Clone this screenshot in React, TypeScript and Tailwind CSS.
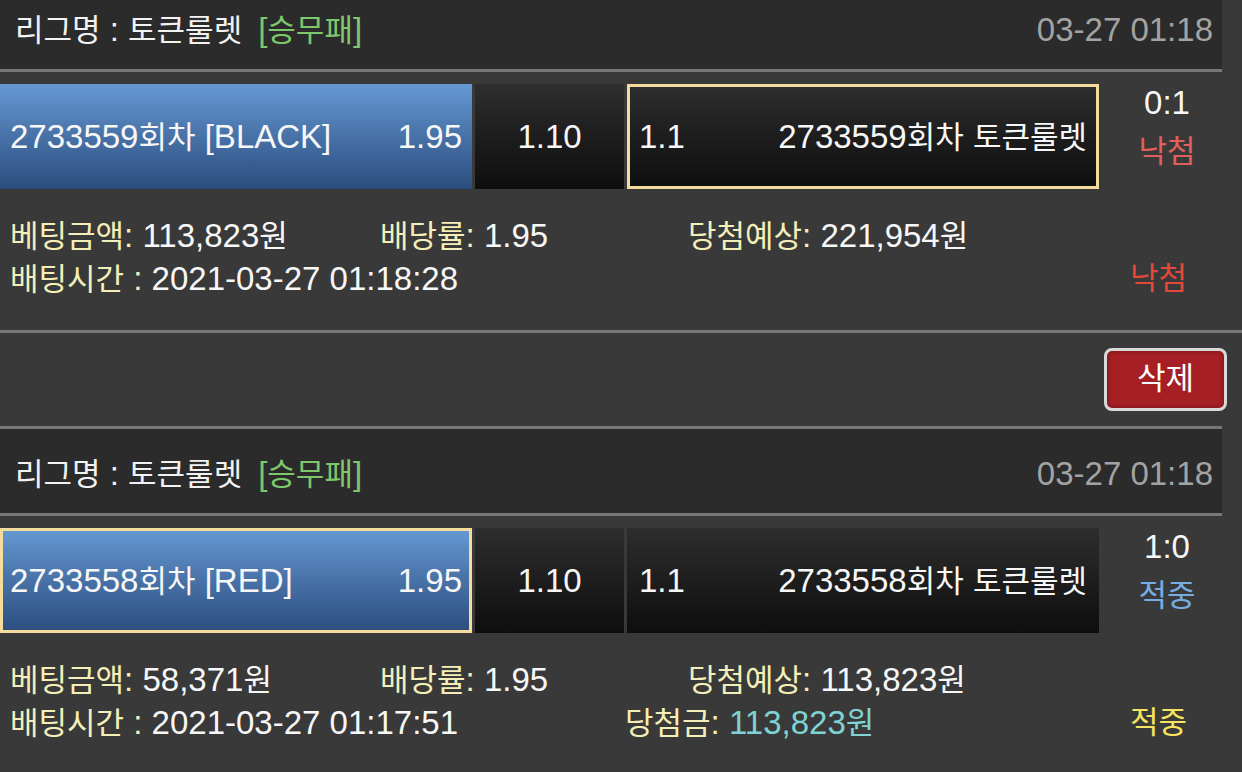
const FONT = "font-['Liberation_Sans','Noto_Sans_CJK_KR',sans-serif]"

type Bet = {
  round: string
  pick: string
  result: string
  win: boolean
  selectedLeft: boolean
  amount: string
  expected: string
  time: string
}

const bets: Bet[] = [
  {
    round: '2733559',
    pick: 'BLACK',
    result: '0:1',
    win: false,
    selectedLeft: false,
    amount: '113,823원',
    expected: '221,954원',
    time: '2021-03-27 01:18:28',
  },
  {
    round: '2733558',
    pick: 'RED',
    result: '1:0',
    win: true,
    selectedLeft: true,
    amount: '58,371원',
    expected: '113,823원',
    time: '2021-03-27 01:17:51',
  },
]

// hangul runs are set a little smaller than the latin text around them
const T = ({ children }: { children: string }) => (
  <>
    {children.split(/([가-힣]+)/).map((part, i) =>
      /[가-힣]/.test(part) ? (
        <span key={i} className="text-[31px]">
          {part}
        </span>
      ) : (
        part
      ),
    )}
  </>
)

const CardHeader = () => (
  <div className="w-[1222px] h-[90px] border-y-[3px] border-[#777777] bg-[#2b2b2b] flex items-center justify-between pl-[15px] pr-[9px] pt-[6px]">
    <div className="flex items-center">
      <span className="text-[#f2f2f2]">
        <T>리그명 : 토큰룰렛</T>
      </span>
      <span className="ml-[16px] text-[#7fc76d]">
        <T>[승무패]</T>
      </span>
    </div>
    <span className="text-[#a3a3a3]">03-27 01:18</span>
  </div>
)

const BetCard = ({ bet }: { bet: Bet }) => (
  <div>
    <CardHeader />

    <div className="mt-[12px] h-[105px] flex">
      <div
        className={`w-[472px] h-full flex items-center justify-between px-[7px] bg-linear-to-b from-[#6699d3] to-[#2b4d7e] bg-origin-border border-[3px] ${
          bet.selectedLeft ? 'border-[#f3dc9c]' : 'border-transparent'
        }`}
      >
        <span>
          <T>{`${bet.round}회차 [${bet.pick}]`}</T>
        </span>
        <span>1.95</span>
      </div>
      <div className="ml-[3px] w-[149px] h-full flex items-center justify-center bg-linear-to-b from-[#2e2e2e] to-[#0e0e0e]">
        1.10
      </div>
      <div
        className={`ml-[3px] w-[472px] h-full flex items-center justify-between px-[9px] bg-linear-to-b from-[#2e2e2e] to-[#0e0e0e] bg-origin-border border-[3px] ${
          bet.selectedLeft ? 'border-transparent' : 'border-[#f3dc9c]'
        }`}
      >
        <span>1.1</span>
        <span>
          <T>{`${bet.round}회차 토큰룰렛`}</T>
        </span>
      </div>
      <div className="w-[136px] flex flex-col items-center leading-[38px] gap-[11px]">
        <span>{bet.result}</span>
        <span className={`text-[31px] ${bet.win ? 'text-[#76aee3]' : 'text-[#e0605b]'}`}>
          {bet.win ? '적중' : '낙첨'}
        </span>
      </div>
    </div>

    <div className="mt-[26px] pl-[10px] leading-[42px]">
      <div className="flex">
        <div className="w-[370px]">
          <span className="text-[#f4efb9]">
            <T>베팅금액:</T>
          </span>{' '}
          <T>{bet.amount}</T>
        </div>
        <div className="w-[308px]">
          <span className="text-[#f4efb9]">
            <T>배당률:</T>
          </span>{' '}
          1.95
        </div>
        <div>
          <span className="text-[#f4efb9]">
            <T>당첨예상:</T>
          </span>{' '}
          <T>{bet.expected}</T>
        </div>
      </div>
      <div className="flex">
        <div className="w-[615px]">
          <span className="text-[#f4efb9]">
            <T>배팅시간 :</T>
          </span>{' '}
          {bet.time}
        </div>
        <div className="w-[505px]">
          {bet.win && (
            <>
              <span className="text-[#f4efb9]">
                <T>당첨금:</T>
              </span>{' '}
              <span className="text-[#7fd3d3]">
                <T>{bet.expected}</T>
              </span>
            </>
          )}
        </div>
        <div className={`text-[31px] ${bet.win ? 'text-[#f5e55e]' : 'text-[#e5473a]'}`}>
          {bet.win ? '적중' : '낙첨'}
        </div>
      </div>
    </div>
  </div>
)

export default function App() {
  return (
    <div className={`w-[1242px] h-[772px] overflow-hidden bg-[#393939] text-[33px] text-[#f7f7f7] ${FONT}`}>
      <div className="-mt-[18px]">
        <BetCard bet={bets[0]} />

        <div className="mt-[29px] border-t-[3px] border-[#777777] flex justify-end pt-[15px] pb-[15px] pr-[15px]">
          <button className="w-[123px] h-[63px] rounded-[8px] border-[3px] border-[#d9d9d9] bg-[#a51f25] text-[31px] text-white shadow-[inset_0_0_4px_rgba(0,0,0,0.35)]">
            삭제
          </button>
        </div>

        <BetCard bet={bets[1]} />
      </div>
    </div>
  )
}
